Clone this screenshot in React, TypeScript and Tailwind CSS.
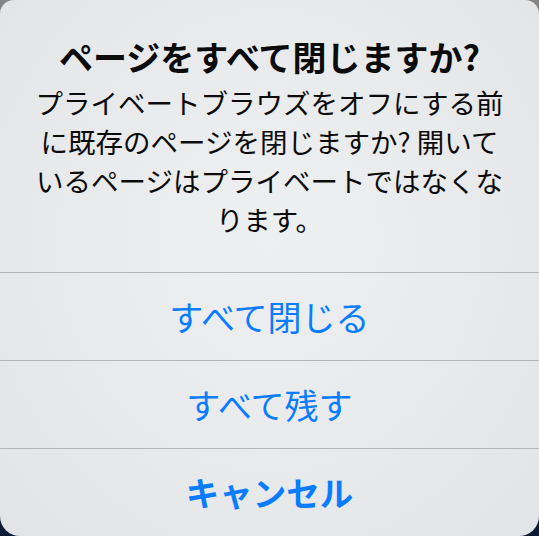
export default function App() {
  const buttons = [
    { label: "すべて閉じる", bold: false },
    { label: "すべて残す", bold: false },
    { label: "キャンセル", bold: true },
  ];

  return (
    <div
      className="w-[539px] h-[536px] overflow-hidden bg-[linear-gradient(180deg,#858585_0%,#5a5f68_50%,#0b1a35_100%)]"
      style={{ fontFamily: '"Noto Sans CJK JP", "Noto Sans", sans-serif' }}
    >
      <div className="flex h-full flex-col overflow-hidden rounded-t-[14px] rounded-b-[20px] bg-[radial-gradient(ellipse_at_50%_45%,#eeeff1_0%,#e8e9eb_60%,#e2e3e5_100%)]">
        {/* タイトルとメッセージ */}
        <div className="flex h-[272px] flex-col items-center pt-[38px] text-center text-[#0b0b0b]">
          <h1 className="text-[34px] font-bold leading-[38px] whitespace-nowrap">
            ページをすべて閉じますか?
          </h1>
          <p className="mt-[7px] text-[27.5px] leading-[39px] whitespace-nowrap">
            プライベートブラウズをオフにする前
            <br />
            に既存のページを閉じますか? 開いて
            <br />
            いるページはプライベートではなくな
            <br />
            ります。
          </p>
        </div>

        {/* ボタン */}
        {buttons.map((b) => (
          <div
            key={b.label}
            className="flex h-[88px] items-center justify-center border-t border-[#b4b5b8]"
          >
            <span
              className={
                b.bold
                  ? "text-[33.5px] font-bold text-[#0a7cff]"
                  : "text-[34px] text-[#0a7cff]"
              }
            >
              {b.label}
            </span>
          </div>
        ))}
      </div>
    </div>
  );
}
